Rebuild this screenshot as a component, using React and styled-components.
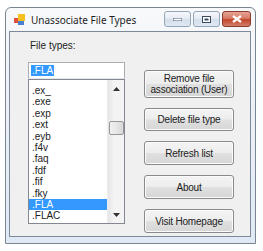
import React from 'react';
import styled, { createGlobalStyle } from 'styled-components';

const Global = createGlobalStyle`
  html, body { margin: 0; padding: 0; background: #ffffff; }
  body { width: 263px; height: 251px; overflow: hidden; }
  * { box-sizing: border-box; }
`;

const Window = styled.div`
  margin: 7px 0 0 5px;
  width: 251px;
  height: 237px;
  border: 1px solid #7a8594;
  border-radius: 6px 6px 0 0;
  background: linear-gradient(180deg, #f8f9fb 0%, #f0f3f7 30%, #dfe9f5 100%);
  display: flex;
  flex-direction: column;
  padding: 0 4px 6px 3px;
`;

const TitleBar = styled.div`
  height: 23px;
  display: flex;
  align-items: center;
  padding-left: 5px;
`;

const Title = styled.span`
  font-family: "Noto Sans", "Open Sans", sans-serif;
  font-size: 10px;
  color: #1e1e1e;
  margin-left: 6px;
  flex: 1;
`;

const Captions = styled.div`
  display: flex;
  gap: 2px;
  align-self: flex-start;
  margin-top: 3px;
`;

const CapButton = styled.div`
  width: ${p => p.$w}px;
  height: 16px;
  border: 1px solid ${p => (p.$close ? '#8a3a2e' : '#95a5ba')};
  border-radius: 3px;
  background: ${p =>
    p.$close
      ? 'linear-gradient(180deg, #e8a494 0%, #d77a66 45%, #c3452c 55%, #d2806a 100%)'
      : 'linear-gradient(180deg, #f6f8fb 0%, #e6ecf4 45%, #d4dfec 55%, #e0e8f2 100%)'};
  display: flex;
  align-items: center;
  justify-content: center;
`;

const Client = styled.div`
  flex: 1;
  border: 1px solid #7d8a9c;
  background: #f0f0f0;
  display: flex;
  padding: 8px 0 0 18px;
  gap: 19px;
`;

const LeftCol = styled.div`
  width: 97px;
  display: flex;
  flex-direction: column;
`;

const Label = styled.div`
  font-family: "Liberation Sans", Arial, sans-serif;
  font-size: 10px;
  color: #222;
  margin-left: 2px;
  height: 22px;
  line-height: 12px;
`;

const TextBox = styled.div`
  height: 17px;
  border: 1px solid #abadb3;
  border-bottom-color: #e3e9ef;
  background: #fff;
  padding: 2px 0 0 2px;
  font-family: "Liberation Sans", Arial, sans-serif;
  font-size: 10px;
  line-height: 12px;
`;

const Sel = styled.span`
  background: #3399ff;
  color: #fff;
  padding: 0 1px;
`;

const ListBox = styled.div`
  height: 145px;
  border: 1px solid #828790;
  background: #fff;
  display: flex;
`;

const Items = styled.div`
  flex: 1;
  padding-top: 5px;
`;

const Item = styled.div`
  height: 11.4px;
  line-height: 11.4px;
  padding-left: 3px;
  font-family: "Liberation Sans", Arial, sans-serif;
  font-size: 10px;
  color: ${p => (p.$selected ? '#fff' : '#222')};
  background: ${p => (p.$selected ? '#3399ff' : 'transparent')};
`;

const ScrollBar = styled.div`
  width: 17px;
  background: linear-gradient(90deg, #e6e6e6, #f4f4f4 40%, #f4f4f4);
  border-left: 1px solid #ededed;
  display: flex;
  flex-direction: column;
  align-items: center;
`;

const Arrow = styled.div`
  height: 17px;
  display: flex;
  align-items: center;
  justify-content: center;
`;

const Track = styled.div`
  flex: 1;
  width: 100%;
  padding-top: ${p => p.$offset}px;
  display: flex;
  justify-content: center;
`;

const Thumb = styled.div`
  width: 15px;
  height: 14px;
  border: 1px solid #979797;
  border-radius: 2px;
  background: linear-gradient(90deg, #f1f1f1, #e6e6e6 50%, #d8d8d8);
`;

const RightCol = styled.div`
  width: 90px;
  display: flex;
  flex-direction: column;
  gap: 10px;
  padding-top: 30px;
`;

const Button = styled.div`
  height: ${p => p.$h}px;
  border: 1px solid #8a8a8a;
  border-radius: 3px;
  background: linear-gradient(180deg, #f4f4f4 0%, #ededed 48%, #e0e0e0 52%, #d6d6d6 100%);
  box-shadow: inset 0 0 0 1px #fbfbfb;
  display: flex;
  align-items: center;
  justify-content: center;
  text-align: center;
  font-family: "Liberation Sans", Arial, sans-serif;
  font-size: 10px;
  letter-spacing: -0.2px;
  line-height: 11px;
  color: #222;
`;

const items = ['.ex_', '.exe', '.exp', '.ext', '.eyb', '.f4v', '.faq', '.fdf', '.fif', '.fky', '.FLA', '.FLAC'];

function AppIcon() {
  return (
    <svg width="11" height="11" viewBox="0 0 11 11">
      <rect x="0" y="4" width="5" height="5" fill="#e0503a" />
      <rect x="4" y="0" width="7" height="7" fill="#f3c020" />
      <rect x="4" y="7" width="6" height="4" fill="#4a7fd0" />
    </svg>
  );
}

export default function App() {
  return (
    <>
      <Global />
      <Window>
        <TitleBar>
          <AppIcon />
          <Title>Unassociate File Types</Title>
          <Captions>
            <CapButton $w={27}>
              <svg width="9" height="3"><rect width="9" height="3" fill="#fff" stroke="#4a5b74" strokeWidth="1" /></svg>
            </CapButton>
            <CapButton $w={27}>
              <svg width="9" height="7"><rect x="0.5" y="0.5" width="8" height="6" fill="#fff" stroke="#3c4b62" /><rect x="2.5" y="2.5" width="4" height="2" fill="#3c4b62" /></svg>
            </CapButton>
            <CapButton $w={29} $close>
              <svg width="10" height="8" viewBox="0 0 10 8">
                <path d="M1 1 L9 7 M9 1 L1 7" stroke="#fff" strokeWidth="2.2" />
              </svg>
            </CapButton>
          </Captions>
        </TitleBar>
        <Client>
          <LeftCol>
            <Label>File types:</Label>
            <TextBox><Sel>.FLA</Sel></TextBox>
            <ListBox>
              <Items>
                {items.map(it => (
                  <Item key={it} $selected={it === '.FLA'}>{it}</Item>
                ))}
              </Items>
              <ScrollBar>
                <Arrow>
                  <svg width="7" height="4"><path d="M0 4 L3.5 0 L7 4 Z" fill="#333" /></svg>
                </Arrow>
                <Track $offset={24}><Thumb /></Track>
                <Arrow>
                  <svg width="7" height="4"><path d="M0 0 L3.5 4 L7 0 Z" fill="#333" /></svg>
                </Arrow>
              </ScrollBar>
            </ListBox>
          </LeftCol>
          <RightCol>
            <Button $h={28}>Remove file<br />association (User)</Button>
            <Button $h={23}>Delete file type</Button>
            <Button $h={24}>Refresh list</Button>
            <Button $h={24}>About</Button>
            <Button $h={24}>Visit Homepage</Button>
          </RightCol>
        </Client>
      </Window>
    </>
  );
}
